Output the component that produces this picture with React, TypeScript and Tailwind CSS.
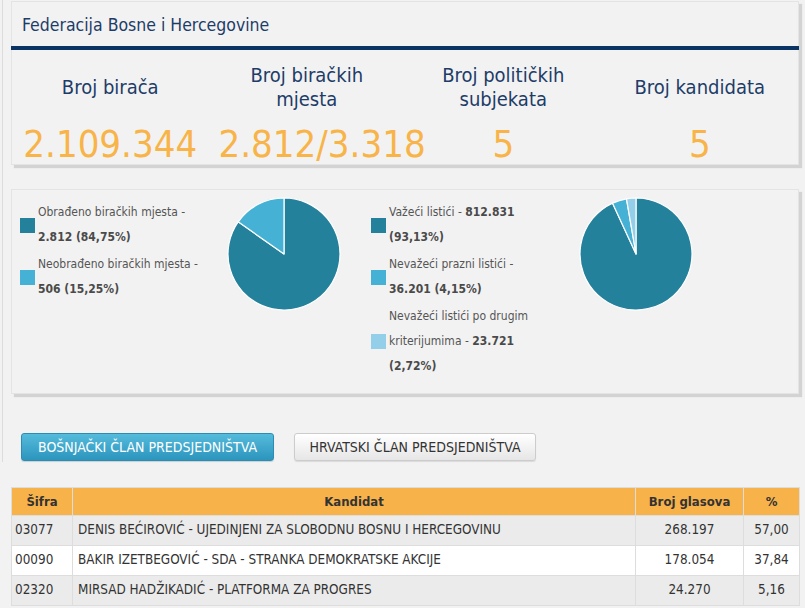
import React from "react";

type Slice = { value: number; color: string };

function Pie({ slices }: { slices: Slice[] }) {
  const cx = 60;
  const cy = 60;
  const r = 56;
  const total = slices.reduce((a, s) => a + s.value, 0);
  let acc = 0;
  const pt = (f: number) => {
    const a = f * Math.PI * 2 - Math.PI / 2;
    return [cx + r * Math.cos(a), cy + r * Math.sin(a)];
  };
  return (
    <svg width="120" height="120" viewBox="0 0 120 120">
      {slices.map((s, i) => {
        const f0 = acc / total;
        acc += s.value;
        const f1 = acc / total;
        const [x0, y0] = pt(f0);
        const [x1, y1] = pt(f1);
        const large = f1 - f0 > 0.5 ? 1 : 0;
        const d = `M ${cx} ${cy} L ${x0} ${y0} A ${r} ${r} 0 ${large} 1 ${x1} ${y1} Z`;
        return <path key={i} d={d} fill={s.color} stroke="#ffffff" strokeWidth="1.2" strokeLinejoin="round" />;
      })}
    </svg>
  );
}

function LegendItem({ color, lines }: { color: string; lines: React.ReactNode[] }) {
  return (
    <div className="flex items-center gap-[3px]">
      <div className="w-[15px] h-[15px] shrink-0" style={{ backgroundColor: color }} />
      <div className="flex flex-col">
        {lines.map((l, i) => (
          <div key={i} className="h-[25px] leading-[25px] whitespace-nowrap">
            {l}
          </div>
        ))}
      </div>
    </div>
  );
}

const DARK = "#24819b";
const MID = "#45b2d5";
const LIGHT = "#94cfe9";

export default function App() {
  const font = { fontFamily: '"DejaVu Sans Condensed", "DejaVu Sans", Tahoma, sans-serif' };
  const rows = [
    ["03077", "DENIS BEĆIROVIĆ - UJEDINJENI ZA SLOBODNU BOSNU I HERCEGOVINU", "268.197", "57,00", "bg-[#ebebeb]"],
    ["00090", "BAKIR IZETBEGOVIĆ - SDA - STRANKA DEMOKRATSKE AKCIJE", "178.054", "37,84", "bg-white"],
    ["02320", "MIRSAD HADŽIKADIĆ - PLATFORMA ZA PROGRES", "24.270", "5,16", "bg-[#ebebeb]"],
  ];
  return (
    <div className="w-[805px] h-[608px] overflow-hidden bg-[#f2f2f2] pl-[2px]" style={font}>
      <div className="border-l border-[#dcdcdc] pl-[8px] pr-[5px] pt-[1px] pb-[1px]">
        {/* Panel 1 */}
        <div className="w-[788px] h-[164px] border border-[#e4e4e4] bg-[#f2f2f2] shadow-[3px_3px_1px_#d3d3d3] flex flex-col">
          <div className="h-[45px] flex items-center pl-[10px] pt-[2px] text-[17.5px] text-[#1d3c68]">
            Federacija Bosne i Hercegovine
          </div>
          <div className="h-[4px] bg-[#0b3464] -mx-[1px]" />
          <div className="grid grid-cols-4 pt-[13px]">
            {[
              ["Broj birača"],
              ["Broj biračkih", "mjesta"],
              ["Broj političkih", "subjekata"],
              ["Broj kandidata"],
            ].map((h, i) => (
              <div key={i} className="h-[48px] flex flex-col items-center justify-center text-[20px] leading-[24px] text-[#1d3c68]">
                {h.map((l, j) => (
                  <div key={j}>{l}</div>
                ))}
              </div>
            ))}
            {["2.109.344", "2.812/3.318", "5", "5"].map((n, i) => (
              <div key={i} className="mt-[13px] px-[10px] text-center whitespace-nowrap text-[38px] leading-[40px] text-[#f8b449]">
                {n}
              </div>
            ))}
          </div>
        </div>

        {/* Panel 2 */}
        <div className="mt-[24px] w-[788px] h-[205px] border border-[#e4e4e4] bg-[#f2f2f2] shadow-[3px_3px_1px_#d3d3d3] flex text-[12px] text-[#555555]">
          <div className="w-[212px] pl-[8px] pt-[10px] flex flex-col gap-[2px]">
            <LegendItem
              color={DARK}
              lines={["Obrađeno biračkih mjesta -", <b className="text-[#4a4a4a]">2.812 (84,75%)</b>]}
            />
            <LegendItem
              color={MID}
              lines={["Neobrađeno biračkih mjesta -", <b className="text-[#4a4a4a]">506 (15,25%)</b>]}
            />
          </div>
          <div className="pt-[4px] w-[143px]">
            <Pie slices={[{ value: 84.75, color: DARK }, { value: 15.25, color: MID }]} />
          </div>
          <div className="w-[209px] pl-[4px] pt-[10px] flex flex-col gap-[2px]">
            <LegendItem
              color={DARK}
              lines={[
                <span>
                  Važeći listići - <b className="text-[#4a4a4a]">812.831</b>
                </span>,
                <b className="text-[#4a4a4a]">(93,13%)</b>,
              ]}
            />
            <LegendItem
              color={MID}
              lines={["Nevažeći prazni listići -", <b className="text-[#4a4a4a]">36.201 (4,15%)</b>]}
            />
            <LegendItem
              color={LIGHT}
              lines={[
                "Nevažeći listići po drugim",
                <span>
                  kriterijumima - <b className="text-[#4a4a4a]">23.721</b>
                </span>,
                <b className="text-[#4a4a4a]">(2,72%)</b>,
              ]}
            />
          </div>
          <div className="pt-[4px]">
            <Pie
              slices={[
                { value: 93.13, color: DARK },
                { value: 4.15, color: MID },
                { value: 2.72, color: LIGHT },
              ]}
            />
          </div>
        </div>

        {/* Buttons */}
        <div className="mt-[39px] ml-[10px] flex gap-[20px] pb-[0px]">
          <div className="h-[28px] w-[253px] flex items-center justify-center rounded-[3px] border border-[#2b8db4] bg-gradient-to-b from-[#55bbdc] to-[#2b95bd] text-white text-[14px] shadow-[0_1px_1px_rgba(0,0,0,0.15)]">
            BOŠNJAČKI ČLAN PREDSJEDNIŠTVA
          </div>
          <div className="h-[28px] w-[242px] flex items-center justify-center rounded-[3px] border border-[#cccccc] bg-gradient-to-b from-[#ffffff] to-[#e6e6e6] text-[#333333] text-[14px] shadow-[0_1px_1px_rgba(0,0,0,0.1)]">
            HRVATSKI ČLAN PREDSJEDNIŠTVA
          </div>
        </div>
      </div>

      {/* Table */}
      <div className="mt-[25px] ml-[9px]">
        <table className="border-collapse text-[13.4px] text-[#333333] table-fixed w-[788px]">
          <colgroup>
            <col className="w-[61px]" />
            <col className="w-[563px]" />
            <col className="w-[108px]" />
            <col className="w-[56px]" />
          </colgroup>
          <thead>
            <tr className="h-[28px] bg-[#f8b24a] text-[13px]">
              <th className="border border-[#dddddd] font-bold text-center">Šifra</th>
              <th className="border border-[#dddddd] font-bold text-center">Kandidat</th>
              <th className="border border-[#dddddd] font-bold text-center">Broj glasova</th>
              <th className="border border-[#dddddd] font-bold text-center">%</th>
            </tr>
          </thead>
          <tbody>
            {rows.map((r, i) => (
              <tr key={i} className={`h-[30px] ${r[4]}`}>
                <td className="border border-[#dddddd] pl-[3px]">{r[0]}</td>
                <td className="border border-[#dddddd] pl-[5px]">{r[1]}</td>
                <td className="border border-[#dddddd] text-center">{r[2]}</td>
                <td className="border border-[#dddddd] text-center">{r[3]}</td>
              </tr>
            ))}
          </tbody>
        </table>
      </div>
    </div>
  );
}
